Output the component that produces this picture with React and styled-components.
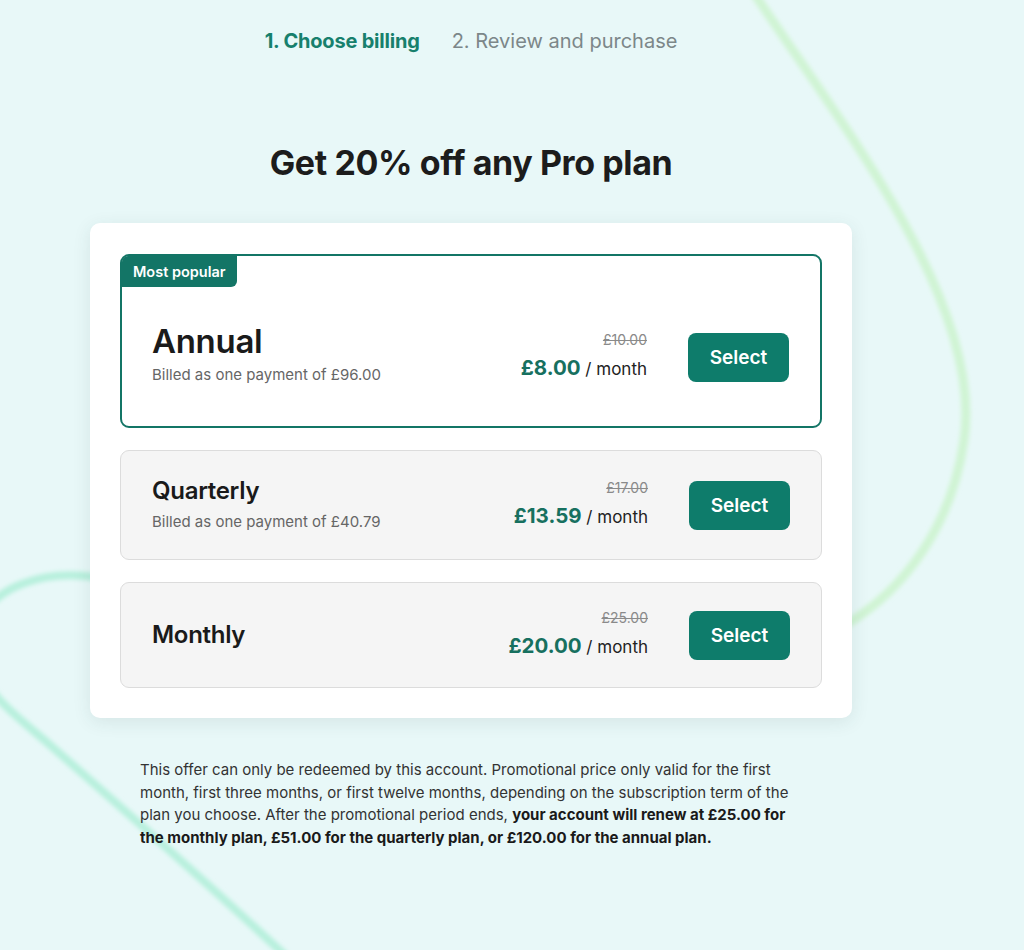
import React from 'react';
import styled, { createGlobalStyle } from 'styled-components';

const GlobalStyle = createGlobalStyle`
  * { box-sizing: border-box; }
  body {
    margin: 0;
    background: #e8f8f8;
    font-family: Inter, "Noto Sans", sans-serif;
    color: #1b1b1b;
  }
`;

const plans = [
  { id: 'annual', name: 'Annual', billed: '£96.00', was: '£10.00', price: '£8.00', popular: true },
  { id: 'quarterly', name: 'Quarterly', billed: '£40.79', was: '£17.00', price: '£13.59' },
  { id: 'monthly', name: 'Monthly', was: '£25.00', price: '£20.00' },
];

const Page = styled.div`
  position: relative;
  min-height: 950px;
  overflow: hidden;
`;

const Decor = styled.svg`
  position: absolute;
  inset: 0;
  width: 100%;
  height: 100%;
  z-index: 0;
  pointer-events: none;
`;

const Main = styled.main`
  position: relative;
  z-index: 1;
  width: 762px;
  margin-left: 90px;
  padding-top: 29px;
  display: flex;
  flex-direction: column;
  align-items: center;
`;

const Steps = styled.nav`
  display: flex;
  gap: 32px;
  font-size: 20px;
  line-height: 24px;
`;

const Step = styled.span`
  color: ${(p) => (p.$active ? '#17806d' : '#7c8789')};
  font-weight: ${(p) => (p.$active ? 700 : 400)};
  letter-spacing: ${(p) => (p.$active ? '-0.2px' : '0')};
`;

const Title = styled.h1`
  margin: 89px 0 39px;
  font-size: 34px;
  line-height: 42px;
  font-weight: 700;
  letter-spacing: -0.4px;
  color: #1c1c1c;
`;

const Card = styled.section`
  align-self: stretch;
  background: #fff;
  border-radius: 10px;
  box-shadow: 0 4px 18px rgba(40, 70, 70, 0.1);
  padding: 31px 30px 30px;
  display: flex;
  flex-direction: column;
  gap: 22px;
`;

const Option = styled.div`
  position: relative;
  display: flex;
  align-items: center;
  border-radius: 9px;
  ${(p) =>
    p.$popular
      ? `
    background: #fff;
    border: 2px solid #137566;
    padding: 66px 31px 34px 30px;
  `
      : `
    background: #f5f5f5;
    border: 1px solid #dcdcdc;
    padding: 26px 31px 26px 31px;
    min-height: 106px;
  `}
`;

const Badge = styled.div`
  position: absolute;
  top: 0;
  left: 0;
  background: #137566;
  color: #fff;
  font-size: 14.5px;
  font-weight: 600;
  line-height: 31px;
  padding: 0 11px;
  border-radius: 6px 0 6px 0;
`;

const Info = styled.div`
  flex: 1;
  display: flex;
  flex-direction: column;
  gap: ${(p) => (p.$large ? '4px' : '6px')};
  padding-bottom: ${(p) => (p.$large ? '6px' : '0')};
`;

const PlanName = styled.h2`
  margin: 0;
  font-size: ${(p) => (p.$large ? '33px' : '24px')};
  line-height: ${(p) => (p.$large ? '38px' : '28px')};
  font-weight: 600;
  letter-spacing: -0.3px;
  color: #1a1a1a;
`;

const Billed = styled.div`
  font-size: 15px;
  line-height: 22px;
  color: #666;
`;

const Price = styled.div`
  display: flex;
  flex-direction: column;
  align-items: flex-end;
  gap: 5px;
  margin-right: 41px;
`;

const Was = styled.s`
  font-size: 14px;
  line-height: 18px;
  color: #8a8a8a;
`;

const Now = styled.div`
  font-size: 17px;
  line-height: 28px;
  color: #222;
  b {
    font-size: 20.5px;
    font-weight: 700;
    color: #17705f;
  }
`;

const SelectButton = styled.button`
  width: 101px;
  height: 49px;
  border: none;
  border-radius: 8px;
  background: #0e7c6b;
  color: #fff;
  font-family: inherit;
  font-size: 19px;
  font-weight: 600;
  cursor: pointer;
`;

const Note = styled.p`
  align-self: flex-start;
  width: 664px;
  margin: 41px 0 0 50px;
  font-size: 15px;
  line-height: 22.5px;
  color: #333;
  b {
    color: #1a1a1a;
    font-weight: 700;
  }
`;

const App = () => {
  return (
    <Page>
      <GlobalStyle />
      <Decor viewBox="0 0 1024 950" preserveAspectRatio="none">
        <defs>
          <filter id="soft" x="-20%" y="-20%" width="140%" height="140%">
            <feGaussianBlur stdDeviation="2.2" />
          </filter>
        </defs>
        <path
          d="M752 -10 C 830 110, 985 300, 964 440 C 952 525, 905 590, 845 625"
          fill="none"
          stroke="#d0f4d4"
          strokeWidth="9"
          filter="url(#soft)"
        />
        <path
          d="M95 577 C 45 570, -10 585, -25 630 C -35 680, 10 710, 50 745 C 130 815, 210 885, 290 960"
          fill="none"
          stroke="#b8f0dd"
          strokeWidth="8"
          filter="url(#soft)"
        />
      </Decor>
      <Main>
        <Steps>
          <Step $active>1. Choose billing</Step>
          <Step>2. Review and purchase</Step>
        </Steps>
        <Title>Get 20% off any Pro plan</Title>
        <Card>
          {plans.map((plan) => (
            <Option key={plan.id} $popular={plan.popular}>
              {plan.popular && <Badge>Most popular</Badge>}
              <Info $large={plan.popular}>
                <PlanName $large={plan.popular}>{plan.name}</PlanName>
                {plan.billed && <Billed>Billed as one payment of {plan.billed}</Billed>}
              </Info>
              <Price>
                <Was>{plan.was}</Was>
                <Now>
                  <b>{plan.price}</b> / month
                </Now>
              </Price>
              <SelectButton>Select</SelectButton>
            </Option>
          ))}
        </Card>
        <Note>
          This offer can only be redeemed by this account. Promotional price only valid for the first
          month, first three months, or first twelve months, depending on the subscription term of the
          plan you choose. After the promotional period ends,{' '}
          <b>
            your account will renew at £25.00 for the monthly plan, £51.00 for the quarterly plan, or
            £120.00 for the annual plan.
          </b>
        </Note>
      </Main>
    </Page>
  );
};

export default App;
